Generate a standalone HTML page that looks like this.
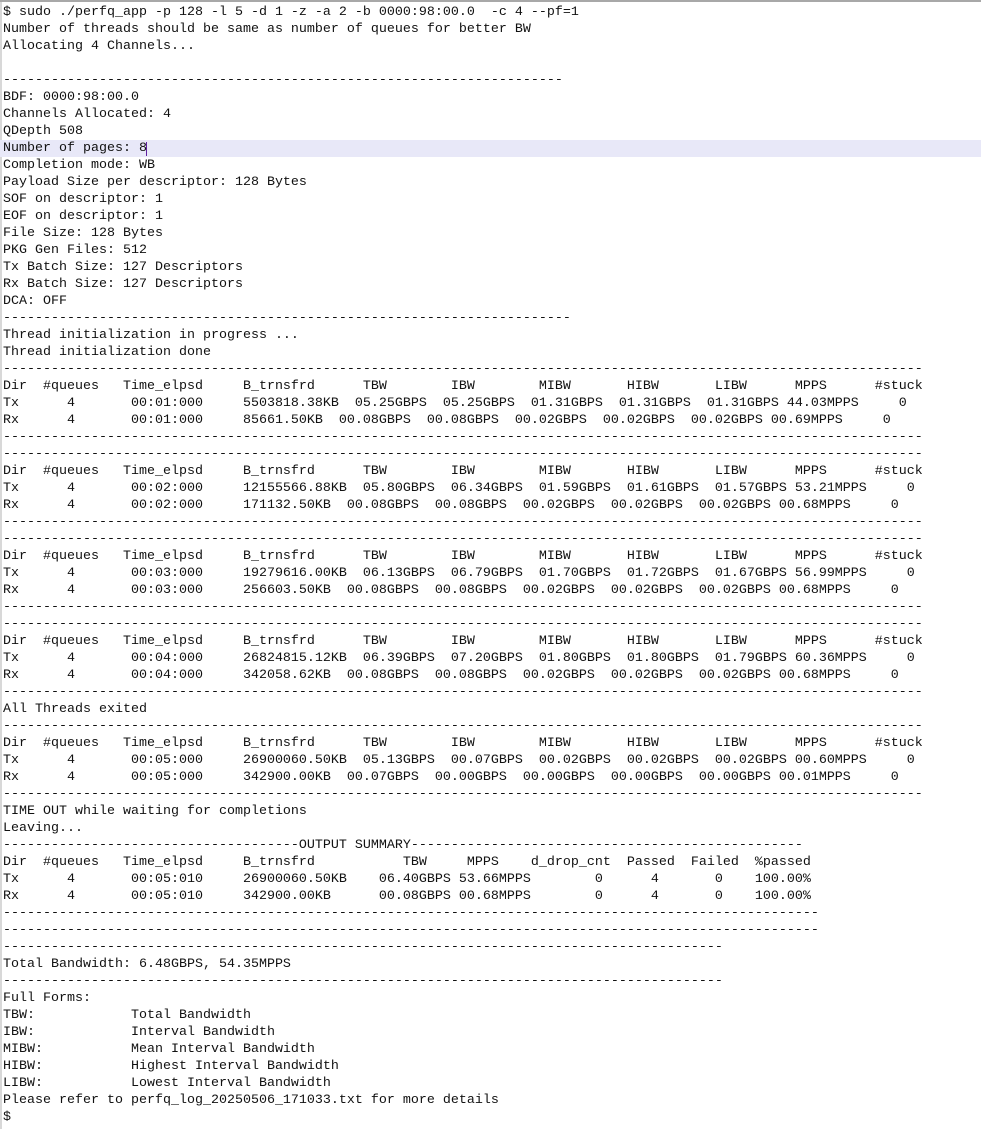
<!DOCTYPE html>
<html><head><meta charset="utf-8"><style>
html,body{margin:0;padding:0;background:#fff;width:981px;height:1129px;overflow:hidden}
body{border-top:2px solid #a8a8a8;box-sizing:border-box;position:relative}
.lb{position:absolute;left:0;top:0;width:2px;height:1129px;background:#d8d8d8}
.hl{position:absolute;left:0;top:138px;width:981px;height:17px;background:#e8e8f8}
.cur{position:absolute;left:146px;top:140px;width:1px;height:14px;background:#6020a0}
pre{position:absolute;left:3px;top:2px;margin:0;font-family:"Liberation Mono","Courier New",monospace;font-size:13.33px;line-height:17px;color:#111}
</style></head><body><div class="lb"></div><div class="hl"></div><div class="cur"></div><pre>$ sudo ./perfq_app -p 128 -l 5 -d 1 -z -a 2 -b 0000:98:00.0  -c 4 --pf=1
Number of threads should be same as number of queues for better BW
Allocating 4 Channels...

----------------------------------------------------------------------
BDF: 0000:98:00.0
Channels Allocated: 4
QDepth 508
Number of pages: 8
Completion mode: WB
Payload Size per descriptor: 128 Bytes
SOF on descriptor: 1
EOF on descriptor: 1
File Size: 128 Bytes
PKG Gen Files: 512
Tx Batch Size: 127 Descriptors
Rx Batch Size: 127 Descriptors
DCA: OFF
-----------------------------------------------------------------------
Thread initialization in progress ...
Thread initialization done
-------------------------------------------------------------------------------------------------------------------
Dir  #queues   Time_elpsd     B_trnsfrd      TBW        IBW        MIBW       HIBW       LIBW      MPPS      #stuck
Tx      4       00:01:000     5503818.38KB  05.25GBPS  05.25GBPS  01.31GBPS  01.31GBPS  01.31GBPS 44.03MPPS     0
Rx      4       00:01:000     85661.50KB  00.08GBPS  00.08GBPS  00.02GBPS  00.02GBPS  00.02GBPS 00.69MPPS     0
-------------------------------------------------------------------------------------------------------------------
-------------------------------------------------------------------------------------------------------------------
Dir  #queues   Time_elpsd     B_trnsfrd      TBW        IBW        MIBW       HIBW       LIBW      MPPS      #stuck
Tx      4       00:02:000     12155566.88KB  05.80GBPS  06.34GBPS  01.59GBPS  01.61GBPS  01.57GBPS 53.21MPPS     0
Rx      4       00:02:000     171132.50KB  00.08GBPS  00.08GBPS  00.02GBPS  00.02GBPS  00.02GBPS 00.68MPPS     0
-------------------------------------------------------------------------------------------------------------------
-------------------------------------------------------------------------------------------------------------------
Dir  #queues   Time_elpsd     B_trnsfrd      TBW        IBW        MIBW       HIBW       LIBW      MPPS      #stuck
Tx      4       00:03:000     19279616.00KB  06.13GBPS  06.79GBPS  01.70GBPS  01.72GBPS  01.67GBPS 56.99MPPS     0
Rx      4       00:03:000     256603.50KB  00.08GBPS  00.08GBPS  00.02GBPS  00.02GBPS  00.02GBPS 00.68MPPS     0
-------------------------------------------------------------------------------------------------------------------
-------------------------------------------------------------------------------------------------------------------
Dir  #queues   Time_elpsd     B_trnsfrd      TBW        IBW        MIBW       HIBW       LIBW      MPPS      #stuck
Tx      4       00:04:000     26824815.12KB  06.39GBPS  07.20GBPS  01.80GBPS  01.80GBPS  01.79GBPS 60.36MPPS     0
Rx      4       00:04:000     342058.62KB  00.08GBPS  00.08GBPS  00.02GBPS  00.02GBPS  00.02GBPS 00.68MPPS     0
-------------------------------------------------------------------------------------------------------------------
All Threads exited
-------------------------------------------------------------------------------------------------------------------
Dir  #queues   Time_elpsd     B_trnsfrd      TBW        IBW        MIBW       HIBW       LIBW      MPPS      #stuck
Tx      4       00:05:000     26900060.50KB  05.13GBPS  00.07GBPS  00.02GBPS  00.02GBPS  00.02GBPS 00.60MPPS     0
Rx      4       00:05:000     342900.00KB  00.07GBPS  00.00GBPS  00.00GBPS  00.00GBPS  00.00GBPS 00.01MPPS     0
-------------------------------------------------------------------------------------------------------------------
TIME OUT while waiting for completions
Leaving...
-------------------------------------OUTPUT SUMMARY-------------------------------------------------
Dir  #queues   Time_elpsd     B_trnsfrd           TBW     MPPS    d_drop_cnt  Passed  Failed  %passed
Tx      4       00:05:010     26900060.50KB    06.40GBPS 53.66MPPS        0      4       0    100.00%
Rx      4       00:05:010     342900.00KB      00.08GBPS 00.68MPPS        0      4       0    100.00%
------------------------------------------------------------------------------------------------------
------------------------------------------------------------------------------------------------------
------------------------------------------------------------------------------------------
Total Bandwidth: 6.48GBPS, 54.35MPPS
------------------------------------------------------------------------------------------
Full Forms:
TBW:            Total Bandwidth
IBW:            Interval Bandwidth
MIBW:           Mean Interval Bandwidth
HIBW:           Highest Interval Bandwidth
LIBW:           Lowest Interval Bandwidth
Please refer to perfq_log_20250506_171033.txt for more details
$</pre></body></html>
